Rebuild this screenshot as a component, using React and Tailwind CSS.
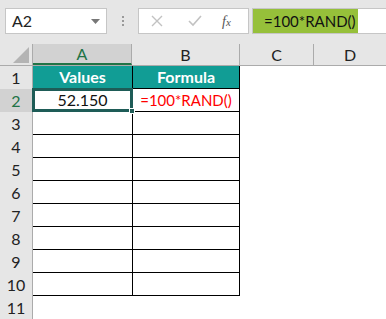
import React from 'react';

const rows = [1, 2, 3, 4, 5, 6, 7, 8, 9, 10, 11];

const App = () => {
  return (
    <div
      className="w-[386px] h-[319px] overflow-hidden bg-[#e6e6e6] flex flex-col"
      style={{ fontFamily: 'Lato, "Open Sans", sans-serif' }}
    >
      {/* Formula bar */}
      <div className="h-[44px] flex items-start pt-[8px] shrink-0">
        <div className="ml-[5px] w-[102px] h-[26px] bg-white border border-[#c6c6c6] flex items-center justify-between px-[6px]">
          <span className="text-[16px] text-[#222]">A2</span>
          <svg width="9" height="5" viewBox="0 0 9 5">
            <path d="M0 0h9L4.5 5z" fill="#777" />
          </svg>
        </div>
        <div className="w-[31px] h-[26px] flex flex-col items-center justify-center gap-[2px]">
          <span className="w-[2px] h-[2px] bg-[#999]" />
          <span className="w-[2px] h-[2px] bg-[#999]" />
          <span className="w-[2px] h-[2px] bg-[#999]" />
        </div>
        <div className="w-[111px] h-[26px] bg-white border border-[#c6c6c6] flex items-center">
          <svg width="12" height="12" viewBox="0 0 12 12" className="ml-[12px]">
            <path d="M1 1l10 10M11 1L1 11" stroke="#c2c2c2" strokeWidth="1.4" />
          </svg>
          <svg width="14" height="12" viewBox="0 0 14 12" className="ml-[25px]">
            <path d="M1 6l4 4L13 1" stroke="#c2c2c2" strokeWidth="1.6" fill="none" />
          </svg>
          <span
            className="ml-[20px] text-[14px] italic text-[#555]"
            style={{ fontFamily: '"Liberation Serif", serif' }}
          >
            f<span className="text-[11px]">x</span>
          </span>
        </div>
        <div className="ml-[3px] flex-1 h-[26px] bg-white border-y border-l border-[#c6c6c6] flex">
          <div className="w-[105px] h-full bg-[#96c03a] flex items-center pl-[11px] text-[15px] text-[#111]">
            =100*RAND()
          </div>
        </div>
      </div>

      {/* Column headers */}
      <div className="h-[22px] flex shrink-0 border-b border-[#ababab]">
        <div className="w-[33px] h-full border-r border-[#ababab] relative">
          <svg width="16" height="16" viewBox="0 0 16 16" className="absolute right-[3px] bottom-[2px]">
            <path d="M16 0V16H0z" fill="#b4b4b4" />
          </svg>
        </div>
        <div className="w-[99px] h-full bg-[#d2d2d2] border-r border-[#ababab] border-b-2 border-b-[#217346] flex items-center justify-center text-[16px] text-[#217346]">
          A
        </div>
        <div className="w-[108px] h-full border-r border-[#ababab] flex items-center justify-center text-[16px] text-[#222]">
          B
        </div>
        <div className="w-[74px] h-full border-r border-[#ababab] flex items-center justify-center text-[16px] text-[#222]">
          C
        </div>
        <div className="flex-1 h-full flex items-center justify-center text-[16px] text-[#222]">
          D
        </div>
      </div>

      {/* Rows */}
      <div className="flex-1 bg-white">
        {rows.map((r) => (
          <div key={r} className="h-[23px] flex">
            <div
              className={`w-[33px] h-full border-r border-[#ababab] flex items-center justify-center text-[16px] ${
                r === 2 ? 'bg-[#d2d2d2] text-[#217346]' : 'bg-[#e6e6e6] text-[#222]'
              }`}
            >
              {r}
            </div>
            {r === 1 && (
              <>
                <div className="w-[99px] h-full bg-[#119d95] border-b border-black flex items-center justify-center text-[16px] font-bold text-white">
                  Values
                </div>
                <div className="w-[108px] h-full bg-[#119d95] border-x border-b border-black flex items-center justify-center text-[16px] font-bold text-white">
                  Formula
                </div>
              </>
            )}
            {r === 2 && (
              <>
                <div className="w-[99px] h-full border-b border-black relative flex items-center justify-center text-[16px] text-[#111]">
                  52.150
                  <div className="absolute inset-[-1px] z-10 border-solid border-[3px] border-[#1e5c57]" />
                  <div className="absolute right-[-3px] bottom-[-3px] z-20 w-[6px] h-[6px] bg-[#1e5c57] border border-white" />
                </div>
                <div className="w-[108px] h-full border-x border-b border-black flex items-center justify-center text-[15px] text-[#ff0000]">
                  =100*RAND()
                </div>
              </>
            )}
            {r > 2 && r < 11 && (
              <>
                <div className="w-[99px] h-full border-b border-black" />
                <div className="w-[108px] h-full border-x border-b border-black" />
              </>
            )}
          </div>
        ))}
      </div>
    </div>
  );
};

export default App;
